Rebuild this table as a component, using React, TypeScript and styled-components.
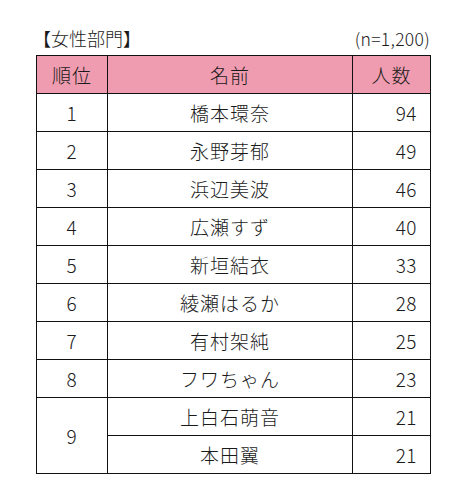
import styled, { createGlobalStyle } from "styled-components";

const GlobalStyle = createGlobalStyle`
  html, body {
    margin: 0;
    padding: 0;
    background: #ffffff;
  }
  body {
    font-family: "Noto Sans CJK JP", "Noto Sans", sans-serif;
    font-weight: 300;
    color: #1a1a1a;
  }
`;

const Page = styled.div`
  width: 469px;
  height: 496px;
  padding: 26px 39px 0 36px;
  box-sizing: border-box;
`;

const TitleRow = styled.div`
  display: flex;
  justify-content: space-between;
  align-items: center;
  height: 24px;
  margin-bottom: 5px;
`;

const Title = styled.div`
  font-size: 18px;
  margin-left: -3px;
`;

const Sample = styled.div`
  font-size: 17.5px;
  letter-spacing: 0.3px;
`;

const Table = styled.table`
  width: 394px;
  border-collapse: collapse;
  table-layout: fixed;
`;

const Head = styled.th`
  background: #f09cb0;
  border: 1.5px solid #111;
  height: 37px;
  padding: 0;
  font-size: 19px;
  font-weight: 300;
  letter-spacing: 1px;
  text-align: center;
`;

const Cell = styled.td<{ $num?: boolean }>`
  border: 1.5px solid #111;
  height: 37px;
  padding: ${(p) => (p.$num ? "0 13px 0 0" : "0")};
  font-size: 19px;
  letter-spacing: ${(p) => (p.$num ? "0.5px" : "1px")};
  text-align: ${(p) => (p.$num ? "right" : "center")};
`;

type Row = { rank: number; name: string; count: number; span?: number; skipRank?: boolean };

const rows: Row[] = [
  { rank: 1, name: "橋本環奈", count: 94 },
  { rank: 2, name: "永野芽郁", count: 49 },
  { rank: 3, name: "浜辺美波", count: 46 },
  { rank: 4, name: "広瀬すず", count: 40 },
  { rank: 5, name: "新垣結衣", count: 33 },
  { rank: 6, name: "綾瀬はるか", count: 28 },
  { rank: 7, name: "有村架純", count: 25 },
  { rank: 8, name: "フワちゃん", count: 23 },
  { rank: 9, name: "上白石萌音", count: 21, span: 2 },
  { rank: 9, name: "本田翼", count: 21, skipRank: true },
];

export default function App() {
  return (
    <Page>
      <GlobalStyle />
      <TitleRow>
        <Title>【女性部門】</Title>
        <Sample>(n=1,200)</Sample>
      </TitleRow>
      <Table>
        <colgroup>
          <col style={{ width: 71 }} />
          <col style={{ width: 245 }} />
          <col style={{ width: 78 }} />
        </colgroup>
        <thead>
          <tr>
            <Head>順位</Head>
            <Head>名前</Head>
            <Head>人数</Head>
          </tr>
        </thead>
        <tbody>
          {rows.map((r, i) => (
            <tr key={i}>
              {!r.skipRank && <Cell rowSpan={r.span}>{r.rank}</Cell>}
              <Cell>{r.name}</Cell>
              <Cell $num>{r.count}</Cell>
            </tr>
          ))}
        </tbody>
      </Table>
    </Page>
  );
}
